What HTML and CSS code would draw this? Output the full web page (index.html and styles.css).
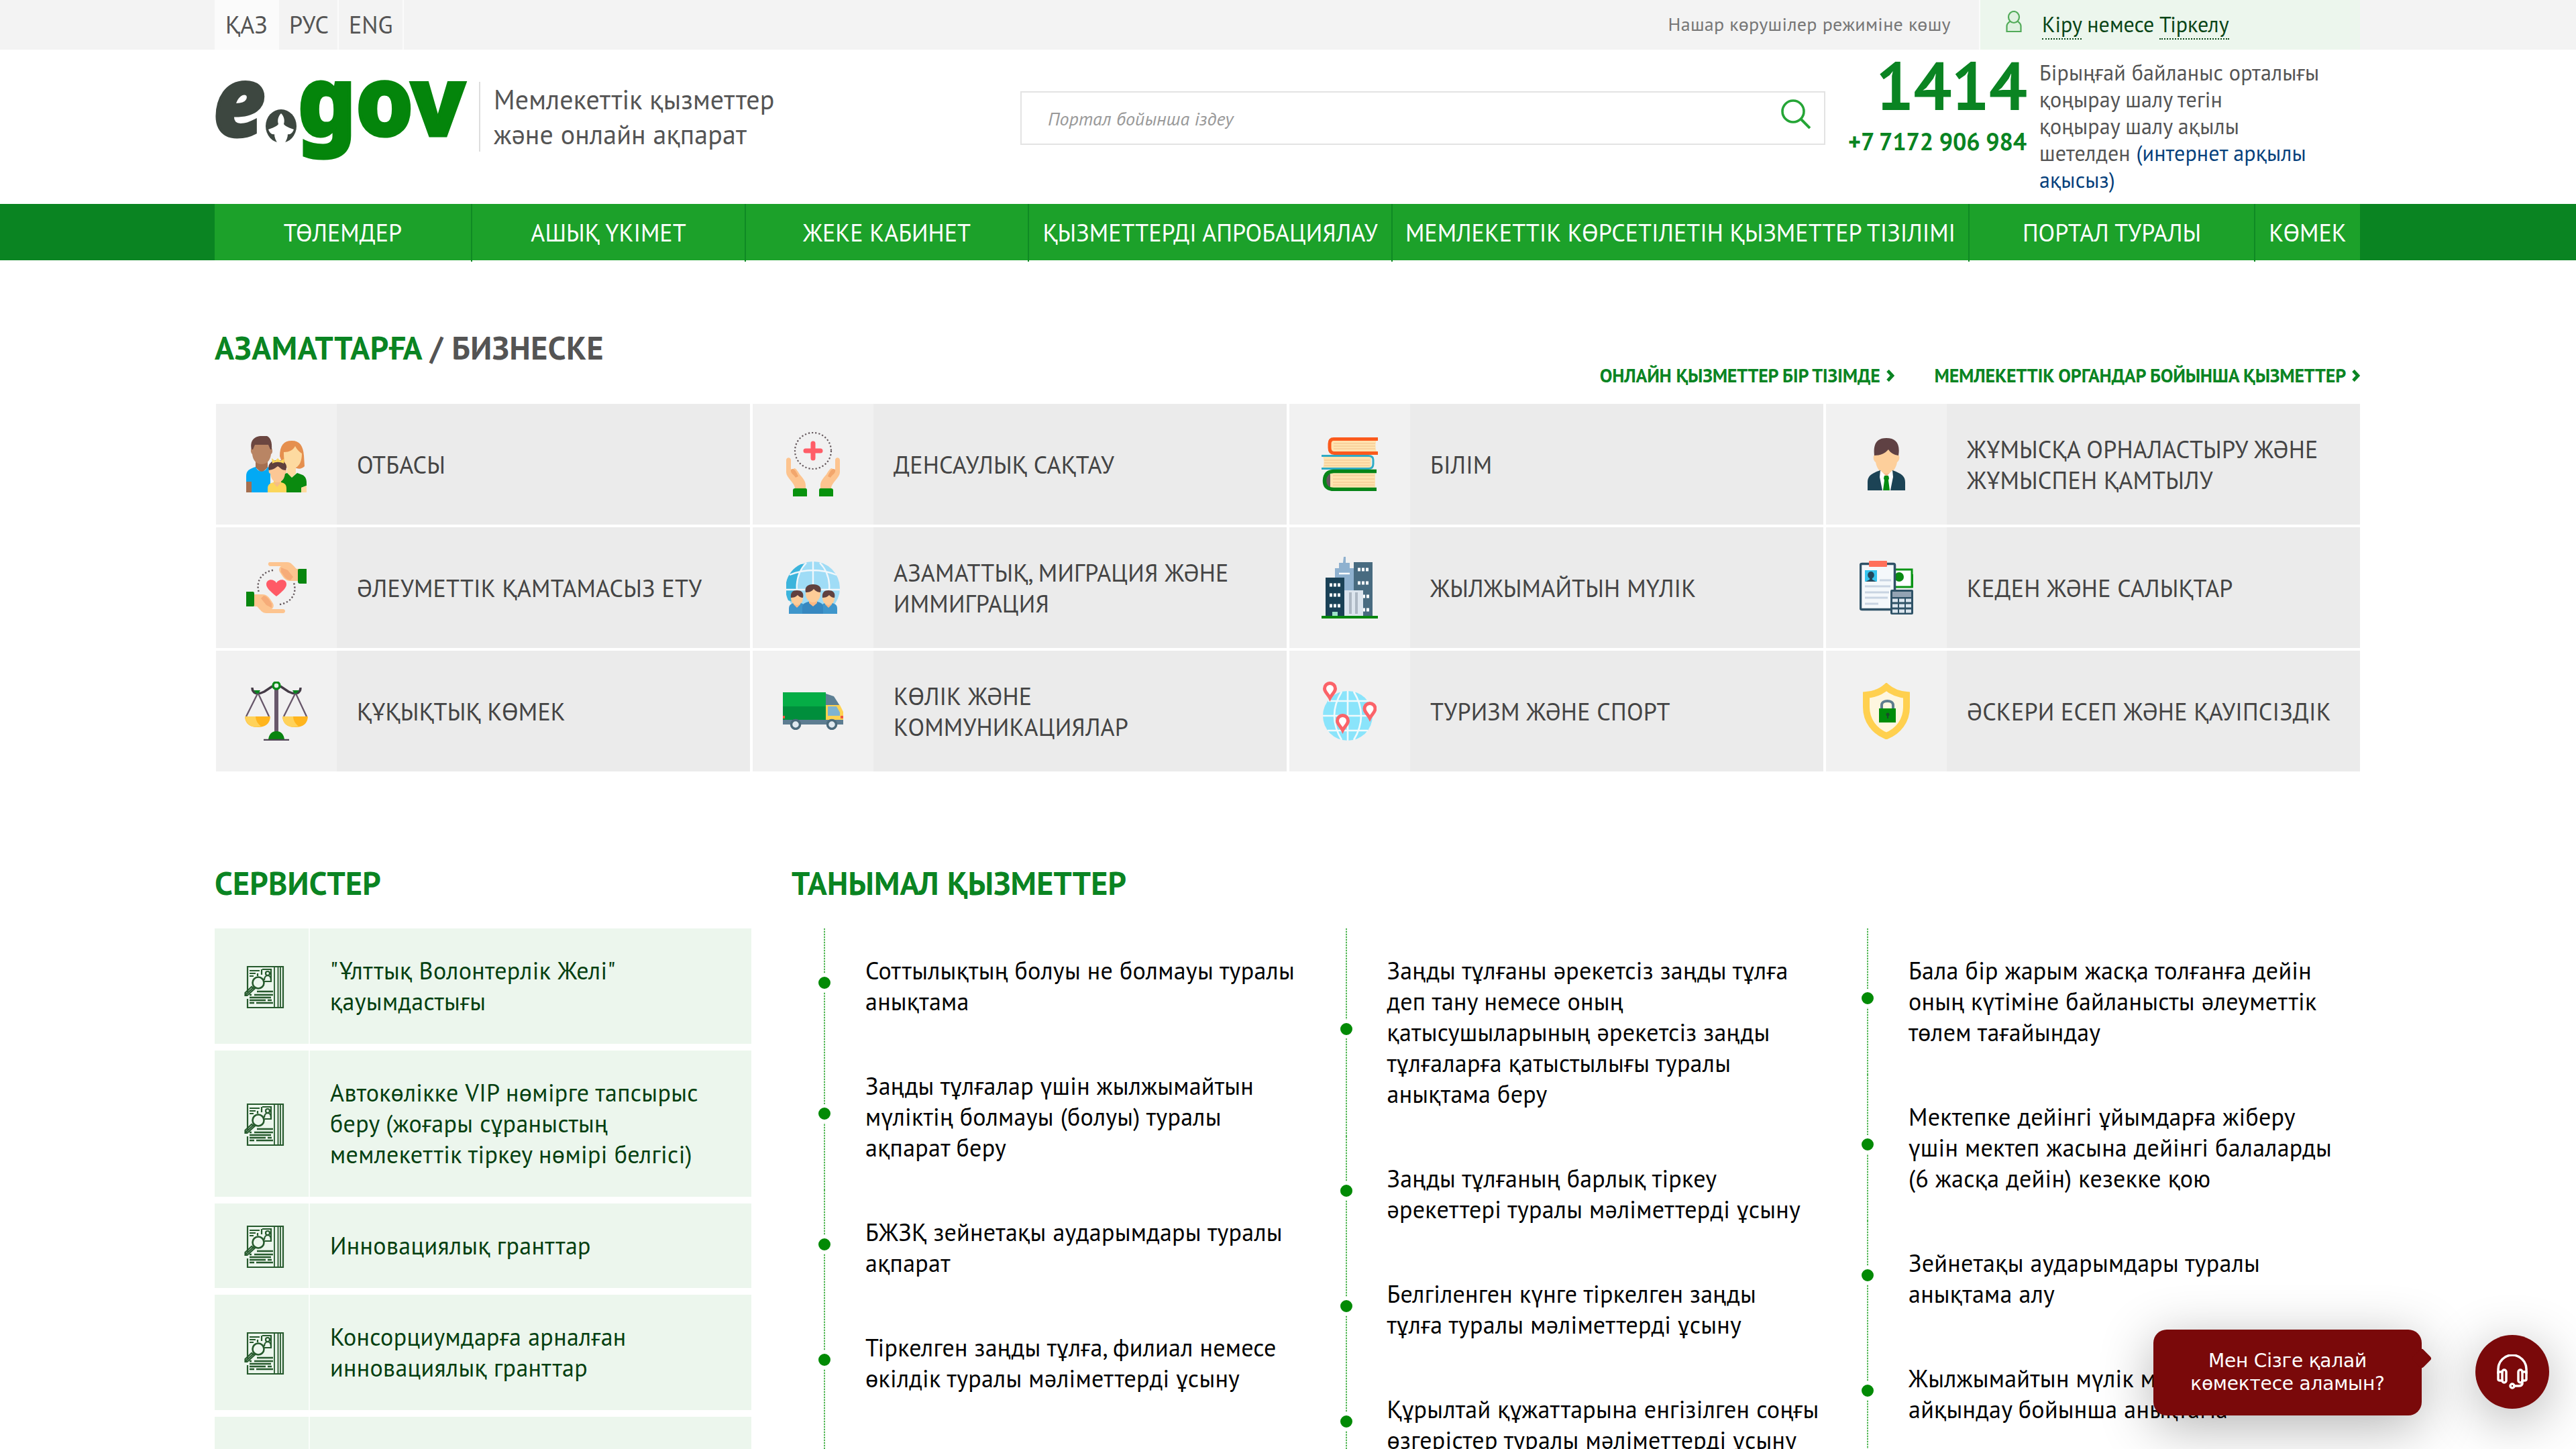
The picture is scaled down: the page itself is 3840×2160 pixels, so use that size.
FILE: index.html
```html
<!DOCTYPE html>
<html lang="kk">
<head>
<meta charset="utf-8">
<title>eGov — Мемлекеттік қызметтер және онлайн ақпарат</title>
<link rel="stylesheet" href="styles.css">
</head>
<body>
<svg class="defs" aria-hidden="true">
  <symbol id="doc" viewBox="0 0 60 64">
    <g fill="none" stroke="#265a2d" stroke-width="2.200">
      <path d="M5 40V2h53v61H5V50" /><path d="M45 2v61M50.500 2v61M54 2v61" stroke-width="1.800"/>
      <path d="M8 8h15M8 12h9M8 16h6M20 12v4" /><path d="M27 6h13v18H29M26 6v8"/>
      <circle cx="35" cy="12" r="3"/><path d="M30 22c0-9 10-9 10 0"/>
      <circle cx="21" cy="26" r="8.500" stroke-width="2.600" fill="#ecf6ed"/>
      <path d="M14 33l-12 11M11 32l-9.500 9v4h3l11-10z"/>
      <path d="M19 39h24M8 44h3M15 44h28M8 48h32M8 52h24M35 52h6M8 56h7M18 56h25" stroke-width="2.400"/>
    </g>
  </symbol>
  <symbol id="arrow" viewBox="0 0 12 18"><path d="M2 1.500L9 9l-7 7.500" fill="none" stroke="#0a8422" stroke-width="4.800"/></symbol>
</svg>

<div class="topbar">
  <div class="wrap topbar-row">
    <nav class="langs"><a class="lang active">ҚАЗ</a><a class="lang">РУС</a><a class="lang">ENG</a></nav>
    <a class="lowvision">Нашар көрушілер режиміне көшу</a>
    <div class="login">
      <svg class="user" viewBox="0 0 24 32" fill="#dff1e0" stroke="#52ab59" stroke-width="2.200"><path d="M1.500 31v-8c0-5 4-6.500 6-8h9c2 1.500 6 3 6 8v8z"/><ellipse cx="12" cy="9.500" rx="8" ry="8.500"/></svg>
      <span class="login-text"><a>Кіру</a> немесе <a>Тіркелу</a></span>
    </div>
  </div>
</div>

<header class="wrap header">
  <svg class="logo" viewBox="0 0 376 120">
    <text x="-2" y="81" class="logo-e" textLength="77" lengthAdjust="spacingAndGlyphs">e</text>
    <ellipse cx="99" cy="66" rx="23" ry="25" fill="#3d4740"/>
    <path d="M99 47c4 4 6 10 4 16 3 4 10 6 15 8-2 5-5 8-9 7 0 5-2 9-5 14l-1 4h-8l-1-4c-3-5-5-9-5-14-4 1-7-2-9-7 5-2 12-4 15-8-2-6 0-12 4-16z" fill="#fff"/>
    <text x="124" y="80" class="logo-gov" textLength="249" lengthAdjust="spacingAndGlyphs">gov</text>
  </svg>
  <div class="slogan">Мемлекеттік қызметтер<br>және онлайн ақпарат</div>
  <div class="search">
    <span>Портал бойынша іздеу</span>
    <svg viewBox="0 0 44 44" fill="none" stroke="#25a536" stroke-width="3.600"><circle cx="18" cy="18" r="16"/><path d="M29 29l14 14" stroke-width="4"/></svg>
  </div>
  <div class="phones"><b class="short">1414</b><b class="full">+7 7172 906 984</b></div>
  <div class="contact">Бірыңғай байланыс орталығы<br>қоңырау шалу тегін<br>қоңырау шалу ақылы<br>шетелден <a>(интернет арқылы<br>ақысыз)</a></div>
</header>

<div class="navbar">
  <nav class="wrap nav"><a>ТӨЛЕМДЕР</a><a>АШЫҚ ҮКІМЕТ</a><a>ЖЕКЕ КАБИНЕТ</a><a>ҚЫЗМЕТТЕРДІ АПРОБАЦИЯЛАУ</a><a>МЕМЛЕКЕТТІК КӨРСЕТІЛЕТІН ҚЫЗМЕТТЕР ТІЗІЛІМІ</a><a>ПОРТАЛ ТУРАЛЫ</a><a>КӨМЕК</a></nav>
</div>

<main class="wrap">
  <section>
    <div class="cat-head">
      <h2><a>АЗАМАТТАРҒА</a> <span>/ БИЗНЕСКЕ</span></h2>
      <div class="cat-links">
        <a>ОНЛАЙН ҚЫЗМЕТТЕР БІР ТІЗІМДЕ<svg><use href="#arrow"/></svg></a>
        <a>МЕМЛЕКЕТТІК ОРГАНДАР БОЙЫНША ҚЫЗМЕТТЕР<svg><use href="#arrow"/></svg></a>
      </div>
    </div>
    <div class="tiles">
      <a class="tile"><i><svg width="90" height="84" viewBox="0 0 90 84">
        <path d="M50 30C50 14 56 7 68 7s17 8 18 22l1 16c-5 5-10 4-14 2H56z" fill="#e58f4e"/>
        <path d="M56 24c8 0 14-3 17-9 3 6 7 9 10 11 0 10-3 18-9 21v9l-6 6-7-6v-9c-4-5-5-13-5-23z" fill="#fddaa0"/>
        <path d="M52 58l9-3 7 7 8-7 8 3c4 2 6 6 6 12v4l-8 3v7H52z" fill="#0a8a0f"/><path d="M82 77l8-3v10h-8z" fill="#fddaa0"/>
        <path d="M14 30h18v17l-9 8-9-8z" fill="#a56f50"/><path d="M8 18C8 6 14 1 23 1s15 6 15 17c2 4 1 8-1 9-1 9-6 15-14 15S10 36 9 27c-2-2-3-6-1-9z" fill="#b98564"/>
        <path d="M8 20C5 7 12 0 23 0h8c5 2 8 9 7 20h-2l-3-7H13l-3 7z" fill="#6b4640"/>
        <path d="M0 60c0-9 5-11 14-14 4 9 14 9 18 0l4 3v35H0z" fill="#03a9f4"/><path d="M0 68h8v16H0z" fill="#a56f50"/>
        <path d="M32 78c0-6 4-8 9-9v-6h11v6c5 1 8 3 8 9v6H32z" fill="#fbd65b"/><path d="M40 69h12l-6 7z" fill="#f6bd86"/>
        <path d="M34 49c0-7 5-11 13-11s13 4 13 11c1 4 0 7-2 7-1 8-5 13-11 13s-10-5-11-13c-2 0-3-3-2-7z" fill="#fcc795"/>
        <path d="M34 51c-3-9 4-15 13-15s16 6 12 15c-6 0-7-3-12-6-5 4-8 5-13 6z" fill="#60403d"/>
        <path d="M38 33l5 4 4-4 4 4 6-3-1 7c-6-3-12-3-17 0z" fill="#fbd65b"/></svg></i><span>ОТБАСЫ</span></a>
      <a class="tile"><i><svg width="80" height="96" viewBox="0 0 80 96">
        <circle cx="40" cy="28" r="27" fill="none" stroke="#64585c" stroke-width="2.200" stroke-dasharray="2.200 3"/>
        <path d="M40 17v22M29 28h22" stroke="#ff5d67" stroke-width="7" stroke-linecap="round"/>
        <path d="M0 42c0-5 7-5 7 0v16l5-4c3 0 6 6 8 9 5 6 9 10 9 17v4H13C13 76 0 68 0 60z" fill="#fdc48f"/><path d="M7 56c4-3 7 1 11 10l-4 2C11 63 6 62 7 56z" fill="#f2a66c"/>
        <path d="M80 42c0-5-7-5-7 0v16l-5-4c-3 0-6 6-8 9-5 6-9 10-9 17v4h16c0-8 13-16 13-24z" fill="#fdc48f"/><path d="M73 56c-4-3-7 1-11 10l4 2c3-5 8-6 7-12z" fill="#f2a66c"/>
        <path d="M13 84h16q2 0 2 3v9H10v-9q0-3 3-3zM51 84h16q3 0 3 3v9H49v-9q0-3 2-3z" fill="#08920e"/></svg></i><span>ДЕНСАУЛЫҚ САҚТАУ</span></a>
      <a class="tile"><i><svg width="84" height="80" viewBox="0 0 84 80">
        <path d="M14 4h68q-3 8 0 17H14z" fill="#ffe3b0"/><path d="M84 2.500H18q-6 0-6 7v6q0 8 7 8h65" fill="none" stroke="#fb5a1c" stroke-width="5"/><path d="M18 9h62M18 13h62M18 17h62" stroke="#f6cd96" stroke-width="1.500"/>
        <path d="M2 28h72v17H2q3-8 0-17z" fill="#ffe3b0"/><path d="M0 27.500h70q7 0 7 6v6q0 7-7 7H0" fill="none" stroke="#2eabc6" stroke-width="3"/><path d="M4 34h68M4 38h68M4 42h68" stroke="#f6cd96" stroke-width="1.500"/>
        <path d="M12 51h68v25H12z" fill="#ffe3b0"/><path d="M6 55h7v20H7z" fill="#66535e"/><path d="M82 50.500H18Q5 51 4.500 64T18 77.500h64" fill="none" stroke="#078418" stroke-width="5.500"/><path d="M17 57h62M17 62h62M17 67h62M17 71h62" stroke="#f6cd96" stroke-width="1.700"/></svg></i><span>БІЛІМ</span></a>
      <a class="tile"><i><svg width="56" height="78" viewBox="0 0 56 78">
        <path d="M20 44h16v12l-8 8-8-8z" fill="#f7b788"/><path d="M10 25c-2 2-2 9 2 11 2 11 8 17 16 17s14-6 16-17c4-2 4-9 2-11L44 12H12z" fill="#fdcf9b"/>
        <path d="M10 26C8 8 14 0 28 0s21 8 18 26c-7-1-12-4-15-9-5 6-12 9-21 9z" fill="#5f4143"/>
        <path d="M0 78V66c0-9 5-13 19-18l9 12 9-12c14 5 19 9 19 18v12z" fill="#1c4355"/><path d="M19 48l9 9 9-9 1 10-4 20H22l-4-20z" fill="#fff"/><path d="M25 56h6l1 4-1 3 2 15H23l2-15-1-3z" fill="#058c10"/></svg></i><span>ЖҰМЫСҚА ОРНАЛАСТЫРУ ЖӘНЕ<br>ЖҰМЫСПЕН ҚАМТЫЛУ</span></a>

      <a class="tile"><i><svg width="90" height="76" viewBox="0 0 90 76">
        <path d="M40 12C22 15 14 30 19 45M50 63C68 60 76 46 71 31" fill="none" stroke="#64585c" stroke-width="2.400" stroke-dasharray="2.200 3"/>
        <path d="M45 51C35 43 30 38 30 33c0-8 11-9 15-2 4-7 15-6 15 2 0 5-5 10-15 18z" fill="#ff5a66"/>
        <path d="M35 0h26c6 0 9 5 14 10h4v18H66c-8 0-11-6-15-12-3-4-2-8 1-10H36c-4 0-4-6-1-6z" fill="#fdc48f"/><path d="M52 8l10 4 8 10-4 5c-8-1-10-8-14-12z" fill="#f6ac79"/><path d="M79 10q3 0 11 0v22H80q-3 0-3-3V12q0-2 2-2z" fill="#08860f"/>
        <path d="M55 76H30c-6 0-9-5-14-10h-4V48h12c8 0 11 6 15 12 3 4 2 8-1 10h17c4 0 4 6 0 6z" fill="#fdc48f"/><path d="M38 68l-8-4-8-10 4-4c6 1 9 7 12 12z" fill="#f6ac79"/><path d="M11 66Q8 66 0 66V44h10q2 0 2 3v17q0 2-1 2z" fill="#08860f"/></svg></i><span>ӘЛЕУМЕТТІК ҚАМТАМАСЫЗ ЕТУ</span></a>
      <a class="tile"><i><svg width="80" height="78" viewBox="0 0 80 78">
        <circle cx="40" cy="40" r="40" fill="#9fdcf6"/><path d="M22 4C0 14-6 40 3 58l20 6c-10-20-8-44 4-60z" fill="#3cb4dc"/>
        <path d="M0 42h80M5 20q35-14 70 0M40 0v60M30 2C12 20 12 50 24 70M50 2c18 18 18 48 6 68" fill="none" stroke="#f0f7fb" stroke-width="2.400"/>
        <g id="mini"><path d="M4 78v-8c0-6 4-8 12-9 9 1 13 3 13 9v8z" fill="#3f96cb"/><path d="M11 59h10v5l-5 5-5-5z" fill="#fbb884"/><ellipse cx="16" cy="55" rx="9" ry="10" fill="#fdcc98"/><path d="M7 54c-1-8 3-11 9-11s11 3 9 11c-4 0-6-2-8-4-3 3-6 4-10 4z" fill="#60413f"/></g><use href="#mini" x="47"/>
        <path d="M24 78V68c0-6 6-8 16-9 10 1 15 3 15 9v10z" fill="#3788c0"/><path d="M34 54h12v8l-6 5-6-5z" fill="#fbb884"/><ellipse cx="40" cy="48" rx="11" ry="13" fill="#fdcc98"/><path d="M29 46c-2-8 3-12 11-12s14 4 11 12c-5 0-8-3-10-5-3 4-7 5-12 5z" fill="#60413f"/></svg></i><span>АЗАМАТТЫҚ, МИГРАЦИЯ ЖӘНЕ<br>ИММИГРАЦИЯ</span></a>
      <a class="tile"><i><svg width="84" height="92" viewBox="0 0 84 92">
        <path d="M33 0h3v9h6v8h6v70H20V17h6V9h6z" fill="#8fb1cf"/><path d="M26 25h16" stroke="#fff" stroke-width="2.500"/><path d="M48 8h28v80H48z" fill="#486b80"/><path d="M6 31h28v57H6z" fill="#1a4156"/>
        <path d="M54 19h18M54 39h18M61 59h10M61 79h10M12 42h18M12 57h18M12 73h18" stroke="#fff" stroke-width="5" stroke-dasharray="4 2"/>
        <path d="M34 50h28v38H34z" fill="#dce5ee"/><path d="M43 53v32M52 53v32" stroke="#adb8c4" stroke-width="4"/><path d="M16 82h8v6h-8z" fill="#9fe3c8"/><path d="M0 88h84v4H0z" fill="#06860f"/></svg></i><span>ЖЫЛЖЫМАЙТЫН МҮЛІК</span></a>
      <a class="tile"><i><svg width="80" height="80" viewBox="0 0 80 80">
        <rect x="48" y="13" width="30" height="26" fill="#fff" stroke="#0a9415" stroke-width="3"/><path d="M79 20v20" stroke="#0a9415" stroke-width="2"/><circle cx="59" cy="24" r="7" fill="#0a8a12"/>
        <rect x="1.500" y="4.500" width="51" height="68" rx="2" fill="#f4f8fb" stroke="#2f5267" stroke-width="3.500"/><rect x="14" y="0" width="27" height="9" rx="1" fill="#ff705b"/>
        <path d="M8 14h18v17H8z" fill="#35c5ef"/><path d="M17 16c6 0 6 9 2 10v2l6 3H9l6-3v-2c-4-1-4-10 2-10z" fill="#23475b"/><path d="M30 29h17M8 38h38M8 47h36M8 55h34M8 64h20" stroke="#c8d4e2" stroke-width="3"/>
        <rect x="46" y="43" width="34" height="37" rx="2" fill="#2f5267"/><path d="M49 46h28v8H49z" fill="#93a3b3"/><path d="M49 59h28M49 67h28M49 75h28" stroke="#dbe5ee" stroke-width="5" stroke-dasharray="8 2"/></svg></i><span>КЕДЕН ЖӘНЕ САЛЫҚТАР</span></a>

      <a class="tile"><i><svg width="94" height="88" viewBox="0 0 94 88">
        <path d="M47 8v70" stroke="#67576a" stroke-width="6"/><path d="M11 9c0 9 8 11 18 6l12-8M83 9c0 9-8 11-18 6L53 7" fill="none" stroke="#443b46" stroke-width="3.500"/>
        <circle cx="47" cy="6" r="5" fill="#e6f1e7" stroke="#0a8a18" stroke-width="3.500"/><path d="M13 13h10l-4 7zM71 13h10l-6 7z" fill="#0a8420"/>
        <path d="M19 18L2 52M20 18l16 34M75 18L58 52M76 18l16 34" stroke="#67576a" stroke-width="2.300"/>
        <path d="M0 52h38q-1 16-19 16T0 52zM56 52h38q-1 16-19 16T56 52z" fill="#ffb51e"/><path d="M0 52h16q0 8 8 15Q3 71 0 52zM56 52h16q0 8 8 15-22 4-24-15z" fill="#ffd25a"/>
        <path d="M35 86q2-12 12-12t12 12z" fill="#08840f"/><path d="M28 87h38" stroke="#4e4453" stroke-width="2.500"/></svg></i><span>ҚҰҚЫҚТЫҚ КӨМЕК</span></a>
      <a class="tile"><i><svg width="90" height="56" viewBox="0 0 90 56">
        <path d="M0 0h64v41H0z" fill="#008e3c"/><path d="M0 0h64v21H0z" fill="#05ad46"/><path d="M64 2l12 4 9 14v24H64z" fill="#5d8094"/><path d="M64 19h21l5 10v14H64z" fill="#ffd250"/><path d="M67 21h13l5 9v5H67z" fill="#7fb3d0"/>
        <path d="M0 41h90v7H0z" fill="#5d7d91"/><path d="M0 35h3v4H0zM86 35h4v4h-4z" fill="#f0563f"/><g fill="#dfe9ef" stroke="#4b6a7b" stroke-width="3.500"><circle cx="19" cy="48" r="6.500"/><circle cx="73" cy="48" r="6.500"/></g></svg></i><span>КӨЛІК ЖӘНЕ<br>КОММУНИКАЦИЯЛАР</span></a>
      <a class="tile"><i><svg width="80" height="88" viewBox="0 0 80 88">
        <circle cx="37" cy="51" r="37" fill="#8ae4fb"/><path d="M0 51h74M8 29h60M7 73h60M37 14v74M28 15q-22 36 0 72M46 15q22 36 0 72" fill="none" stroke="#f1fafc" stroke-width="2.600"/>
        <g fill="#fff" stroke="#fb6369" stroke-width="5"><path id="pin" d="M10.500 2.500a8 8 0 0 1 8 8c0 5-5 8-8 14-3-6-8-9-8-14a8 8 0 0 1 8-8z"/><use href="#pin" x="59.500" y="30"/><use href="#pin" x="19" y="48"/></g></svg></i><span>ТУРИЗМ ЖӘНЕ СПОРТ</span></a>
      <a class="tile"><i><svg width="70" height="84" viewBox="0 0 70 84">
        <path d="M35 6c9 8 18 11 30 12v18c0 20-12 36-30 43C17 72 5 56 5 36V18C17 17 26 14 35 6z" fill="#fef6df" stroke="#ffd04f" stroke-width="10"/>
        <path d="M28 40V33c0-8 17-8 17 0v7" fill="none" stroke="#5f7d8d" stroke-width="4"/><path d="M24 38h25v21H24z" fill="#008d0b"/><circle cx="37" cy="47" r="2.500" fill="#1a4a2a"/><path d="M37 47v6" stroke="#1a4a2a" stroke-width="2"/></svg></i><span>ӘСКЕРИ ЕСЕП ЖӘНЕ ҚАУІПСІЗДІК</span></a>
    </div>
  </section>

  <section class="lower">
    <div class="services">
      <h2>СЕРВИСТЕР</h2>
      <a class="card"><i><svg><use href="#doc"/></svg></i><span>"Ұлттық Волонтерлік Желі"<br>қауымдастығы</span></a>
      <a class="card"><i><svg><use href="#doc"/></svg></i><span>Автокөлікке VIP нөмірге тапсырыс<br>беру (жоғары сұраныстың<br>мемлекеттік тіркеу нөмірі белгісі)</span></a>
      <a class="card"><i><svg><use href="#doc"/></svg></i><span>Инновациялық гранттар</span></a>
      <a class="card"><i><svg><use href="#doc"/></svg></i><span>Консорциумдарға арналған<br>инновациялық гранттар</span></a>
      <a class="card blank"><i></i><span></span></a>
    </div>
    <div class="popular">
      <h2>ТАНЫМАЛ ҚЫЗМЕТТЕР</h2>
      <div class="cols">
        <ul>
          <li>Соттылықтың болуы не болмауы туралы<br>анықтама</li>
          <li>Заңды тұлғалар үшін жылжымайтын<br>мүліктің болмауы (болуы) туралы<br>ақпарат беру</li>
          <li>БЖЗҚ зейнетақы аударымдары туралы<br>ақпарат</li>
          <li>Тіркелген заңды тұлға, филиал немесе<br>өкілдік туралы мәліметтерді ұсыну</li>
          <li class="tail"></li>
        </ul>
        <ul>
          <li>Заңды тұлғаны әрекетсіз заңды тұлға<br>деп тану немесе оның<br>қатысушыларының әрекетсіз заңды<br>тұлғаларға қатыстылығы туралы<br>анықтама беру</li>
          <li>Заңды тұлғаның барлық тіркеу<br>әрекеттері туралы мәліметтерді ұсыну</li>
          <li>Белгіленген күнге тіркелген заңды<br>тұлға туралы мәліметтерді ұсыну</li>
          <li>Құрылтай құжаттарына енгізілген соңғы<br>өзгерістер туралы мәліметтерді ұсыну</li>
        </ul>
        <ul>
          <li>Бала бір жарым жасқа толғанға дейін<br>оның күтіміне байланысты әлеуметтік<br>төлем тағайындау</li>
          <li>Мектепке дейінгі ұйымдарға жіберу<br>үшін мектеп жасына дейінгі балаларды<br>(6 жасқа дейін) кезекке қою</li>
          <li>Зейнетақы аударымдары туралы<br>анықтама алу</li>
          <li>Жылжымайтын мүлік меншік иесін<br>айқындау бойынша анықтама</li>
        </ul>
      </div>
    </div>
  </section>
</main>

<div class="bubble">Мен Сізге қалай<br>көмектесе аламын?</div>
<button class="help" aria-label="Көмек">
  <svg viewBox="0 0 46 52" fill="none" stroke="#fff" stroke-width="3.500" stroke-linecap="round" stroke-linejoin="round"><path d="M2 28V22a21 21 0 0 1 42 0v6M38 41v3q-1 3-5 3h-7"/><rect x="8" y="23" width="6" height="19" rx="3"/><rect x="32" y="23" width="6" height="19" rx="3"/><path d="M8 26H2v11q0 2 3 2h3M38 26h6v11q0 2-3 2h-3"/><circle cx="23" cy="47" r="3"/></svg>
</button>
</body>
</html>
```
FILE: styles.css
```css
*,*::before,*::after{box-sizing:border-box}
html,body{margin:0;padding:0}
body{width:3840px;height:2160px;overflow:hidden;position:relative;background:#fff;color:#000;font-family:"PT Sans","Noto Sans",sans-serif;font-size:36px;line-height:46px;white-space:nowrap}
svg{display:block}
.defs{position:absolute;width:0;height:0}
h2{margin:0;font-size:48px;line-height:62px;font-weight:700;color:#0a8422;letter-spacing:.2px}
i{font-style:normal}
.wrap{width:3198px;margin-left:320px}

.topbar{height:74px;background:#f3f3f3}
.topbar-row{display:flex;height:74px;line-height:74px;color:#545454}
.langs{display:flex}
.lang{padding:0 15px;width:89px;border-right:2px solid #fbfbfb}
.lang.active{width:96px;padding-left:16px;background:#fbfbfb}
.lang:last-child{width:97px}
.lowvision{margin-left:auto;margin-right:42px;font-size:28px;line-height:72px;letter-spacing:.33px;color:#767676}
.login{display:flex;width:568px;padding:0 0 0 38px;border-left:2px solid #fbfbfb;background:#ecf6ed;color:#0a4517;font-size:32px;line-height:72px}
.user{width:24px;height:32px;margin:16px 30px 0 0}
.login a{border-bottom:2px dotted #0a4517}

.header{display:flex;height:230px}
.logo{width:376px;height:120px;margin-top:48px;overflow:visible}
.logo text{font-family:"Noto Sans",sans-serif;font-weight:800;stroke-width:5px}
.logo-e{font-size:142px;font-style:italic;fill:#3d4740;stroke:#3d4740}
.logo-gov{font-size:142px;fill:#04850b;stroke:#04850b}
.slogan{height:104px;margin:48px 0 0 18px;padding-left:20px;border-left:2px solid #ddd;font-size:40px;line-height:52px;letter-spacing:.1px;color:#545454;width:807px}
.search{display:flex;width:1200px;height:80px;margin-top:62px;border:2px solid #e3e3e3;padding-left:39px;justify-content:space-between;font-size:28px;font-style:italic;line-height:78px;color:#999}
.search svg{width:44px;height:44px;margin:10px 20px 0 0}
.phones{width:300px;display:flex;flex-direction:column;align-items:flex-end;color:#0a8422}
.short{font-size:101px;line-height:116px;letter-spacing:-1px;margin-top:-5px}
.full{line-height:46px;margin-top:3px;letter-spacing:-.2px}
.contact{margin:14px 0 0 19px;font-size:32px;line-height:40px;letter-spacing:.15px;color:#545454}
.contact a{color:#06417c}

.navbar{background:#0a8422}
.nav{display:grid;grid-template-columns:384px 408px 422px 542px 860px 426px 156px;height:84px;line-height:86px;background:#1ca12a;color:#fff;text-align:center}
.nav a{border-right:2px solid #0f8a24}
.nav a:last-child{border-right:0}

.cat-head{display:flex;justify-content:space-between;height:214px;padding-top:99px}
.cat-head h2{letter-spacing:.5px}
.cat-head span{color:#545454}
.cat-links{display:flex;gap:60px;margin-top:55px;font-size:28px;line-height:36px;letter-spacing:-.22px;font-weight:700;color:#0a8422}
.cat-links a{display:flex;gap:9px}
.cat-links svg{width:12px;height:18px;margin-top:9px;overflow:visible}
.tiles{display:grid;grid-template-columns:repeat(4,796px);grid-auto-rows:180px;gap:4px;margin-left:2px}
.tile{display:flex;align-items:center;background:#ebebeb;color:#444}
.tile i{display:flex;align-items:center;justify-content:center;width:180px;height:180px;background:#f1f1f1}
.tile span{padding:2px 0 0 30px;letter-spacing:.15px}

.lower{display:flex;padding-top:135px}
.lower h2{margin-bottom:37px}
.services{width:800px;margin-right:60px;color:#043f10}
.card{display:flex;align-items:center;background:#ecf6ed;margin-bottom:10px}
.card i{display:flex;align-items:center;align-self:stretch;width:142px;padding:2px 0 0 44px;border-right:2px solid #fafdfa}
.card svg{width:60px;height:64px}
.card span{padding:40px 0 40px 30px;letter-spacing:.32px}
.blank{height:60px}

.cols{display:grid;grid-template-columns:repeat(3,777.5px);letter-spacing:.27px}
ul{list-style:none;margin:0;padding:0}
li{position:relative;padding:40px 0 40px 110px}
li::before{content:"";position:absolute;left:48px;top:0;bottom:0;width:2px;background:repeating-linear-gradient(#4fb552 0 2px,#d7efd7 2px 4px)}
li::after{content:"";position:absolute;left:35px;top:calc(50% - 19px);width:28px;height:28px;border:5px solid #fff;border-radius:50%;background:#028a05}
.tail{height:80px}
.tail::after{display:none}

.bubble{position:absolute;left:3210px;top:1982px;width:400px;height:128px;display:flex;align-items:center;justify-content:center;text-align:center;background:#7a090a;color:#fff;border-radius:20px;font:28px/34px "DejaVu Sans",sans-serif;letter-spacing:-.2px;box-shadow:0 16px 80px rgba(0,0,0,.3)}
.bubble::after{content:"";position:absolute;left:389px;top:32px;width:22px;height:22px;background:#7a090a;border-radius:4px;transform:rotate(45deg)}
.help{position:absolute;left:3690px;top:1990px;width:110px;height:110px;padding:0;border:0;border-radius:50%;background:#7a090a;display:flex;align-items:center;justify-content:center;box-shadow:0 16px 80px rgba(0,0,0,.3)}
.help svg{width:46px;height:52px}
```
